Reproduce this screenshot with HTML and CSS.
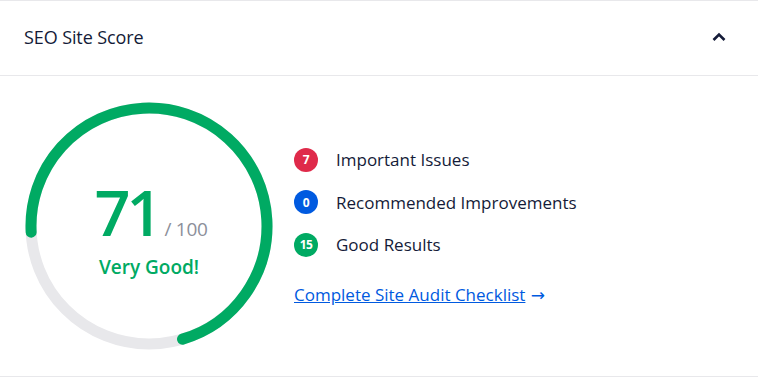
FILE: index.html
```html
<!DOCTYPE html>
<html lang="en">
<head>
<meta charset="UTF-8">
<meta name="viewport" content="width=device-width, initial-scale=1.0">
<title>SEO Site Score</title>
<link rel="stylesheet" href="styles.css">
</head>
<body>
  <div class="card">
    <div class="card-header">
      <span class="card-title">SEO Site Score</span>
      <svg class="chevron" width="14" height="10" viewBox="0 0 14 10">
        <path d="M1.5 8 L7 2.5 L12.5 8" fill="none" stroke="#141b38" stroke-width="2.6"/>
      </svg>
    </div>
    <div class="card-body">
      <div class="score-circle">
        <svg width="248" height="248" viewBox="0 0 248 248">
          <circle cx="124" cy="124" r="118" fill="none" stroke="#e8e8eb" stroke-width="11"/>
          <circle cx="124" cy="124" r="118" fill="none" stroke="#00aa63" stroke-width="11"
                  stroke-linecap="round" stroke-dasharray="528 1000"
                  transform="rotate(177 124 124)"/>
        </svg>
        <div class="score-text">
          <div class="score-line"><span class="score">71</span><span class="total">/ 100</span></div>
          <div class="score-label">Very Good!</div>
        </div>
      </div>
      <div class="results">
        <div class="result-row"><span class="badge red">7</span>Important Issues</div>
        <div class="result-row"><span class="badge blue">0</span>Recommended Improvements</div>
        <div class="result-row"><span class="badge green">15</span>Good Results</div>
        <a class="audit-link" href="#">Complete Site Audit Checklist</a><span class="arrow"> →</span>
      </div>
    </div>
  </div>
</body>
</html>
```

FILE: styles.css
```css
body {
  margin: 0;
  padding: 0;
  font-family: "Open Sans", "Noto Sans", Arial, sans-serif;
  color: #141b38;
  background-color: #ffffff;
}

.card {
  border-top: 1px solid #e8e8eb;
  border-bottom: 1px solid #e8e8eb;
  height: 375px;
}

.card-header {
  height: 74px;
  border-bottom: 1px solid #e8e8eb;
  display: flex;
  align-items: center;
  justify-content: space-between;
  padding: 0 32px 0 24px;
}

.card-title {
  font-size: 18px;
  letter-spacing: -0.1px;
  margin-top: -2px;
}

.chevron {
  display: block;
  margin-top: -3px;
}

.card-body {
  display: flex;
  align-items: center;
  gap: 21px;
  padding: 26px 24px 0 25px;
}

.score-circle {
  position: relative;
  width: 248px;
  height: 248px;
}

.score-circle svg {
  display: block;
}

.score-text {
  position: absolute;
  top: 0;
  left: 0;
  right: 0;
  bottom: 0;
  display: flex;
  flex-direction: column;
  align-items: center;
  justify-content: center;
  padding-bottom: 3px;
}

.score-line {
  display: flex;
  align-items: baseline;
  margin-left: 4px;
}

.score {
  color: #00aa63;
  font-size: 63px;
  font-weight: 600;
  line-height: normal;
  letter-spacing: -4px;
}

.total {
  color: #8c8f9a;
  font-size: 19px;
  margin-left: 6px;
  letter-spacing: -0.3px;
}

.score-label {
  color: #00aa63;
  font-size: 19px;
  font-weight: 600;
  line-height: normal;
}

.results {
  font-size: 17px;
  padding-top: 2px;
}

.result-row {
  display: flex;
  align-items: center;
  height: 24px;
  margin-bottom: 18.5px;
}

.badge {
  width: 24px;
  height: 24px;
  border-radius: 50%;
  color: #ffffff;
  font-size: 12px;
  font-weight: 700;
  display: flex;
  align-items: center;
  justify-content: center;
  margin-right: 18px;
  letter-spacing: -0.5px;
}

.badge.red {
  background-color: #df2a4a;
}

.badge.blue {
  background-color: #005ae0;
}

.badge.green {
  background-color: #00aa63;
}

.audit-link {
  display: inline-block;
  margin-top: 8px;
  color: #005ae0;
  text-decoration: underline;
}

.arrow {
  color: #005ae0;
  font-family: "DejaVu Sans", sans-serif;
  font-size: 17px;
}
```
